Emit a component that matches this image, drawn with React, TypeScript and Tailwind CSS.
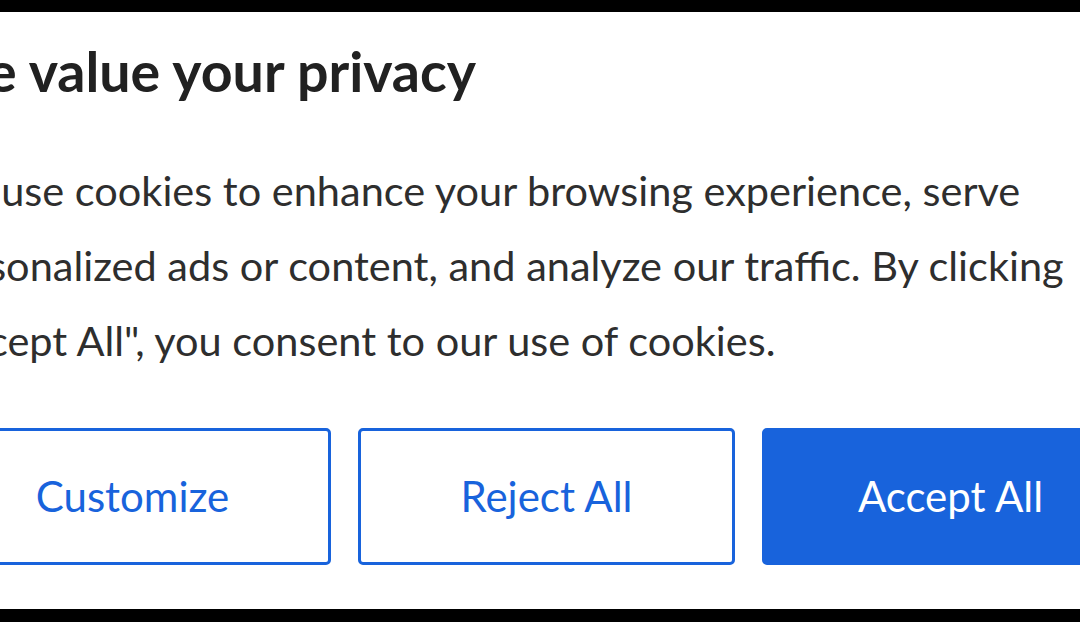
import React from 'react';

const font = { fontFamily: 'Lato, "Noto Sans", sans-serif' };

const App: React.FC = () => {
  return (
    <div className="w-[1080px] h-[622px] bg-black overflow-hidden pt-[12px]" style={font}>
      <div className="h-[597px] bg-white overflow-hidden">
        <div className="ml-[-46px] w-[1300px]">
          <h2 className="ml-[-22px] mt-[27px] text-[55.5px] leading-[64px] font-bold text-[#212121] whitespace-nowrap">
            We value your privacy
          </h2>
          <p className="ml-[-26px] mt-[50px] text-[41.5px] leading-[75px] text-[#2e2e2e] whitespace-nowrap">
            We use cookies to enhance your browsing experience, serve
            <br />
            personalized ads or content, and analyze our traffic. By clicking
            <br />
            "Accept All", you consent to our use of cookies.
          </p>
          <div className="mt-[50px] flex gap-[27px]">
            <button className="w-[377px] h-[137px] rounded-[5px] border-[3px] border-[#1863dc] bg-white text-[#1863dc] text-[42px] pr-[20px]">
              Customize
            </button>
            <button className="w-[377px] h-[137px] rounded-[5px] border-[3px] border-[#1863dc] bg-white text-[#1863dc] text-[42px]">
              Reject All
            </button>
            <button className="w-[377px] h-[137px] rounded-[5px] border-[3px] border-[#1863dc] bg-[#1863dc] text-white text-[42px]">
              Accept All
            </button>
          </div>
        </div>
      </div>
    </div>
  );
};

export default App;
